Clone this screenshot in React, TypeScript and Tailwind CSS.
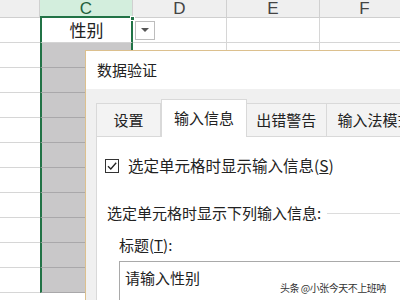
import React from 'react'

const FONT = { fontFamily: '"Noto Sans CJK SC", "Noto Sans", sans-serif' }

// column widths: B (cut), C (selected), D, E, F (cut)
const COLS = [
  { key: 'B', w: 'w-[40px]' },
  { key: 'C', w: 'w-[93px]' },
  { key: 'D', w: 'w-[94px]' },
  { key: 'E', w: 'w-[93px]' },
  { key: 'F', w: 'w-[90px]' },
]

const ROWS = Array.from({ length: 11 }, (_, i) => i)

function Sheet() {
  return (
    <div className="flex flex-col">
      {/* column headers */}
      <div className="flex h-[18px] bg-[#efefef]">
        {COLS.map(c => (
          <div
            key={c.key}
            className={`${c.w} shrink-0 flex items-center justify-center text-[17px] leading-none border-r border-[#d0d0d0] ${
              c.key === 'C' ? 'bg-[#d3eedd] text-[#1f5f3c] border-b-2 border-b-[#217346]' : 'text-[#444] border-b border-b-[#cfcfcf]'
            }`}
            style={{ fontFamily: '"Liberation Sans", sans-serif' }}
          >
            {c.key === 'B' ? '' : c.key}
          </div>
        ))}
      </div>
      {ROWS.map(r => (
        <div key={r} className="flex h-[25px]">
          {COLS.map(c => {
            if (c.key === 'C') {
              return (
                <div
                  key={c.key}
                  className={`${c.w} shrink-0 border-x-2 border-[#217346] ${
                    r === 0 ? 'bg-white border-b border-b-[#d4d4d4] relative' : 'bg-[#c9c8c9] border-b border-b-[#a9a8aa]'
                  }`}
                >
                  {r === 0 && (
                    <>
                      <div className="h-full flex items-center justify-center text-[17px] text-[#222]" style={FONT}>
                        性别
                      </div>
                      <div className="absolute -right-[4px] -top-[2px] w-[5px] h-[5px] bg-[#217346] border border-white" />
                    </>
                  )}
                </div>
              )
            }
            return (
              <div
                key={c.key}
                className={`${c.w} shrink-0 bg-white border-b border-[#d6d6d6] ${c.key !== 'B' ? 'border-r' : ''} ${
                  c.key === 'D' && r === 0 ? 'flex items-center pl-[2px]' : ''
                }`}
              >
                {c.key === 'D' && r === 0 && (
                  <div className="w-[20px] h-[19px] border border-[#bdbdbd] bg-white flex items-center justify-center">
                    <div className="w-0 h-0 border-x-[4px] border-x-transparent border-t-[4px] border-t-[#555]" />
                  </div>
                )}
              </div>
            )
          })}
        </div>
      ))}
    </div>
  )
}

function Dialog() {
  return (
    <div
      className="absolute left-[85px] top-[50px] w-[330px] h-[260px] bg-[#f0f0f0] border border-[#dcc08e] flex flex-col"
      style={FONT}
    >
      {/* title bar */}
      <div className="h-[38px] bg-white flex items-center pl-[11px] text-[15px] text-[#222] shrink-0">数据验证</div>

      {/* tabs */}
      <div className="flex items-end pl-[10px] h-[47px] shrink-0 text-[15px] text-[#222]">
        <div className="w-[67px] h-[33px] flex items-center justify-center bg-[#f3f3f3] border border-b-0 border-[#d9d9d9]">设置</div>
        <div className="w-[89px] h-[38px] flex items-center justify-center bg-white border border-b-0 border-[#d9d9d9] -mb-px relative z-10">
          输入信息
        </div>
        <div className="w-[82px] h-[33px] flex items-center justify-center bg-[#f3f3f3] border border-b-0 border-l-0 border-[#d9d9d9]">出错警告</div>
        <div className="w-[90px] h-[33px] flex items-center pl-[11px] bg-[#f3f3f3] border border-b-0 border-l-0 border-[#d9d9d9] whitespace-nowrap">
          输入法模式
        </div>
      </div>

      {/* panel */}
      <div className="ml-[10px] flex-1 bg-white border border-[#d9d9d9] flex flex-col text-[15px] text-[#222] relative">
        <div className="flex items-center h-[20px] mt-[19px] pl-[8px]">
          <div className="w-[14px] h-[14px] border border-[#333] flex items-center justify-center">
            <svg width="12" height="12" viewBox="0 0 12 12">
              <path d="M2 6.2 L4.8 9 L10.2 2.8" fill="none" stroke="#222" strokeWidth="1.3" />
            </svg>
          </div>
          <span className="ml-[9px] whitespace-nowrap text-[15.5px]">
            选定单元格时显示输入信息(<span className="underline">S</span>)
          </span>
        </div>

        <div className="flex items-center h-[20px] mt-[27px] pl-[10px]">
          <span className="whitespace-nowrap">选定单元格时显示下列输入信息:</span>
          <div className="ml-[6px] flex-1 h-px bg-[#dcdcdc]" />
        </div>

        <div className="h-[20px] mt-[12px] pl-[22px] flex items-center whitespace-nowrap">
          标题(<span className="underline">T</span>):
        </div>

        <div className="mt-[6px] ml-[22px] h-[40px] border border-[#a9a9a9] bg-white flex items-start pt-[5px] pl-[5px]">
          请输入性别
        </div>

        <div
          className="absolute left-[183px] top-[143px] text-[10px] tracking-[-0.5px] text-[#333] whitespace-nowrap"
          style={{ textShadow: '0 0 2px #fff' }}
        >
          头条 @小张今天不上班呐
        </div>
      </div>
    </div>
  )
}

export default function App() {
  return (
    <div className="relative w-[400px] h-[300px] overflow-hidden bg-white">
      <Sheet />
      <Dialog />
    </div>
  )
}
